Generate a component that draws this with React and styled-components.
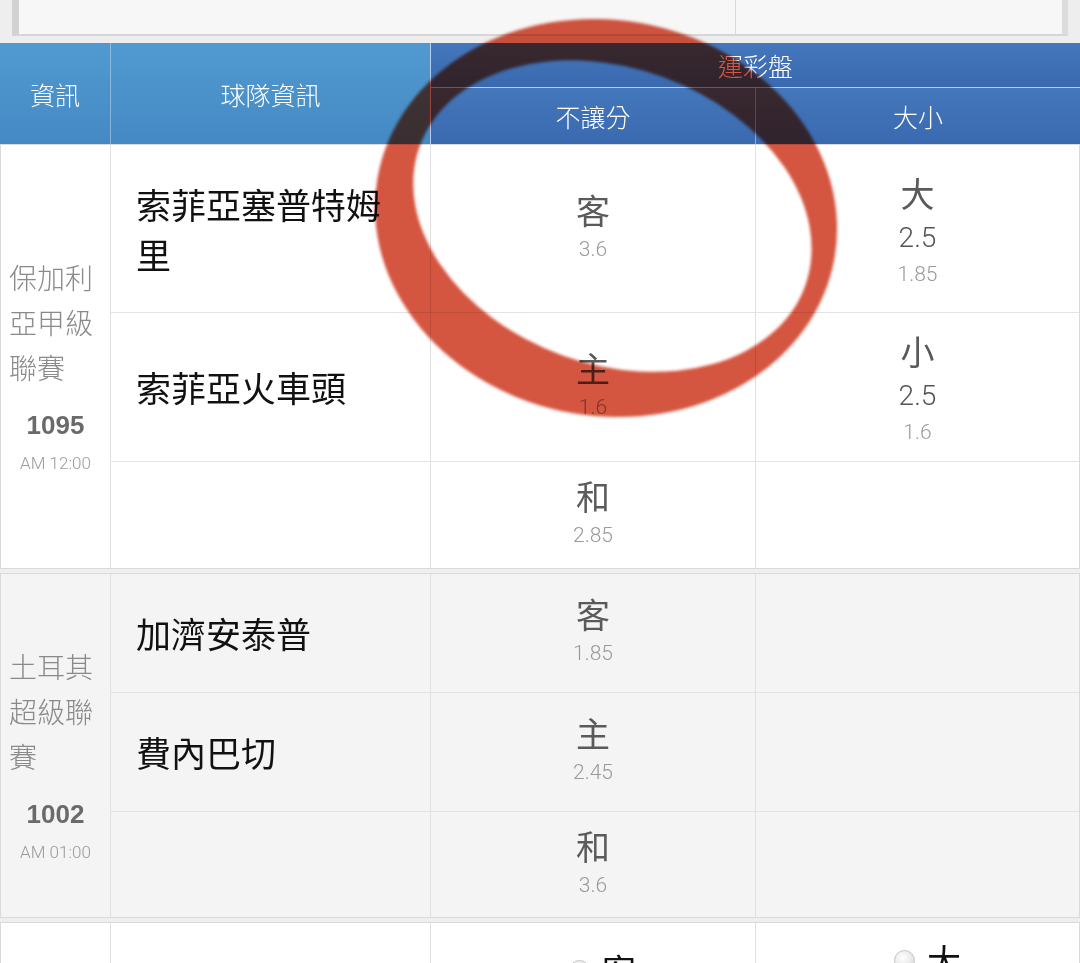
import React from "react";
import styled, { createGlobalStyle } from "styled-components";

const GlobalStyle = createGlobalStyle`
  html, body { margin: 0; padding: 0; background: #ffffff; }
  body {
    font-family: "Noto Sans CJK TC", "Noto Sans", sans-serif;
    width: 1080px;
    overflow: hidden;
  }
  * { box-sizing: border-box; }
`;

const DIGITS = `Roboto, "Liberation Sans", "Noto Sans CJK TC", sans-serif`;

const Page = styled.div`
  position: relative;
  width: 1080px;
  background: #efefef;
`;

const TopArea = styled.div`
  background: #eeeeee;
  padding: 0 12px 7px 12px;
`;

const TopBox = styled.div`
  height: 36px;
  display: grid;
  grid-template-columns: 717px 1fr;
  background: #f7f7f7;
  border-left: 7px solid #d2d2d2;
  border-right: 6px solid #dcdcdc;
  border-bottom: 2px solid #d6d6d6;
`;

const TopSection = styled.div`
  border-right: ${(p) => (p.$divider ? "1px solid #d9d9d9" : "none")};
`;

const Header = styled.div`
  display: grid;
  grid-template-columns: 110px 320px 325px 325px;
  grid-template-rows: 44px 57px;
  color: #ffffff;
  font-size: 25px;
  font-weight: 300;
`;

const HeadCell = styled.div`
  grid-row: ${(p) => p.$row || "auto"};
  grid-column: ${(p) => p.$col || "auto"};
  display: flex;
  align-items: center;
  justify-content: center;
  background: ${(p) =>
    p.$tone === "dark"
      ? "linear-gradient(#4477bb, #3a69b0)"
      : "linear-gradient(#519ad1, #4589c4)"};
  border-left: ${(p) => (p.$edge ? `1px solid ${p.$edge}` : "none")};
  border-top: ${(p) => (p.$topLine ? `1px solid ${p.$topLine}` : "none")};
`;

const AccentChar = styled.span`
  color: #ffffff;
`;

const Match = styled.div`
  display: grid;
  grid-template-columns: 109px 320px 325px 324px;
  grid-template-rows: ${(p) => p.$rows};
  background: ${(p) => p.$bg};
  border: 1px solid #dadada;
  margin-bottom: 4px;
`;

const LeagueCell = styled.div`
  grid-row: 1 / span 3;
  display: flex;
  flex-direction: column;
  justify-content: center;
  padding-top: 17px;
`;

const LeagueName = styled.div`
  padding-left: 8px;
  font-size: 28px;
  line-height: 45px;
  font-weight: 300;
  color: #8a8a8a;
`;

const GameCode = styled.div`
  margin-top: 20px;
  text-align: center;
  font-family: "Liberation Sans", Roboto, sans-serif;
  font-size: 26px;
  line-height: 30px;
  font-weight: 700;
  color: #6a6a6a;
`;

const GameTime = styled.div`
  margin-top: 11px;
  text-align: center;
  font-family: ${DIGITS};
  font-size: 17px;
  line-height: 24px;
  font-weight: 300;
  color: #9a9a9a;
`;

const TeamCell = styled.div`
  display: flex;
  align-items: center;
  padding: 0 36px 0 25px;
  border-left: 1px solid #e0e0e0;
  border-top: ${(p) => (p.$first ? "none" : "1px solid #e4e4e4")};
  font-size: 35px;
  line-height: 50px;
  color: #111111;
`;

const OddsCell = styled.div`
  display: flex;
  flex-direction: column;
  align-items: center;
  justify-content: center;
  border-left: 1px solid #e0e0e0;
  border-top: ${(p) => (p.$first ? "none" : "1px solid #e4e4e4")};
`;

const Pick = styled.div`
  font-size: 34px;
  line-height: ${(p) => p.$lh || 40}px;
  font-weight: 400;
  color: #5a5a5a;
`;

const Line = styled.div`
  font-family: ${DIGITS};
  font-size: 28px;
  line-height: 48px;
  font-weight: 300;
  color: #555555;
`;

const Price = styled.div`
  font-family: ${DIGITS};
  font-size: 21px;
  line-height: ${(p) => p.$lh || 38}px;
  font-weight: 300;
  color: #9a9a9a;
`;

const RadioCell = styled.div`
  display: flex;
  align-items: flex-start;
  gap: 12px;
  padding: ${(p) => p.$top}px 0 0 138px;
  border-left: 1px solid #e0e0e0;
`;

const Radio = styled.span`
  width: 21px;
  height: 21px;
  margin-top: 11px;
  border-radius: 50%;
  border: 1px solid #c4c4c4;
  background: radial-gradient(circle at 40% 35%, #ffffff 0%, #e6e6e6 60%, #cfcfcf 100%);
`;

const RadioLabel = styled.span`
  font-size: 34px;
  line-height: 42px;
  color: #111111;
`;

const Ring = styled.svg`
  position: absolute;
  left: 0;
  top: 0;
  pointer-events: none;
  mix-blend-mode: multiply;
  z-index: 5;
`;

const matches = [
  {
    league: "保加利亞甲級聯賽",
    code: "1095",
    time: "AM 12:00",
    rows: "167px 149px 107px",
    bg: "#ffffff",
    home: "索菲亞塞普特姆里",
    away: "索菲亞火車頭",
    odds: [
      ["客", "3.6"],
      ["主", "1.6"],
      ["和", "2.85"],
    ],
    ou: [
      ["大", "2.5", "1.85"],
      ["小", "2.5", "1.6"],
    ],
  },
  {
    league: "土耳其超級聯賽",
    code: "1002",
    time: "AM 01:00",
    rows: "118px 119px 106px",
    bg: "#f4f4f4",
    home: "加濟安泰普",
    away: "費內巴切",
    odds: [
      ["客", "1.85"],
      ["主", "2.45"],
      ["和", "3.6"],
    ],
    ou: [],
  },
];

function MatchBlock({ m }) {
  return (
    <Match $rows={m.rows} $bg={m.bg}>
      <LeagueCell>
        <LeagueName>{m.league}</LeagueName>
        <GameCode>{m.code}</GameCode>
        <GameTime>{m.time}</GameTime>
      </LeagueCell>
      {[0, 1, 2].map((i) => {
        const team = i === 0 ? m.home : i === 1 ? m.away : "";
        const o = m.odds[i];
        const u = m.ou[i];
        return (
          <React.Fragment key={i}>
            <TeamCell $first={i === 0} style={{ gridRow: i + 1, gridColumn: 2 }}>
              {team}
            </TeamCell>
            <OddsCell $first={i === 0} style={{ gridRow: i + 1, gridColumn: 3 }}>
              {o && (
                <>
                  <Pick>{o[0]}</Pick>
                  <Price>{o[1]}</Price>
                </>
              )}
            </OddsCell>
            <OddsCell $first={i === 0} style={{ gridRow: i + 1, gridColumn: 4 }}>
              {u && (
                <>
                  <Pick $lh={42}>{u[0]}</Pick>
                  <Line>{u[1]}</Line>
                  <Price $lh={24}>{u[2]}</Price>
                </>
              )}
            </OddsCell>
          </React.Fragment>
        );
      })}
    </Match>
  );
}

export default function App() {
  return (
    <Page>
      <GlobalStyle />
      <TopArea>
        <TopBox>
          <TopSection $divider />
          <TopSection />
        </TopBox>
      </TopArea>
      <Header>
        <HeadCell $row="1 / span 2" $col="1">資訊</HeadCell>
        <HeadCell $row="1 / span 2" $col="2" $edge="rgba(255,255,255,0.35)">
          球隊資訊
        </HeadCell>
        <HeadCell $row="1" $col="3 / span 2" $tone="dark" $edge="#b6cdeb">
          <AccentChar>運</AccentChar>彩盤
        </HeadCell>
        <HeadCell $row="2" $col="3" $tone="dark" $edge="#b6cdeb" $topLine="#b6cdeb">
          不讓分
        </HeadCell>
        <HeadCell $row="2" $col="4" $tone="dark" $edge="rgba(255,255,255,0.45)" $topLine="#b6cdeb">
          大小
        </HeadCell>
      </Header>
      {matches.map((m) => (
        <MatchBlock key={m.code} m={m} />
      ))}
      <Match $rows="120px 120px" $bg="#ffffff">
        <LeagueCell />
        <TeamCell $first style={{ gridRow: 1, gridColumn: 2 }} />
        <RadioCell $top={26}>
          <Radio />
          <RadioLabel>客</RadioLabel>
        </RadioCell>
        <RadioCell $top={16}>
          <Radio />
          <RadioLabel>大</RadioLabel>
        </RadioCell>
      </Match>
      <Ring width="1080" height="963" viewBox="0 0 1080 963">
        <defs>
          <mask id="ringHole">
            <rect width="1080" height="963" fill="white" />
            <ellipse cx="612" cy="215" rx="205" ry="148" transform="rotate(10 612 215)" fill="black" />
          </mask>
          <filter id="soft" x="-10%" y="-10%" width="120%" height="120%">
            <feGaussianBlur stdDeviation="1.4" />
          </filter>
        </defs>
        <g filter="url(#soft)">
          <ellipse
            cx="606"
            cy="218"
            rx="232"
            ry="198"
            transform="rotate(10 606 218)"
            fill="#d4553f"
            mask="url(#ringHole)"
          />
        </g>
      </Ring>
    </Page>
  );
}
